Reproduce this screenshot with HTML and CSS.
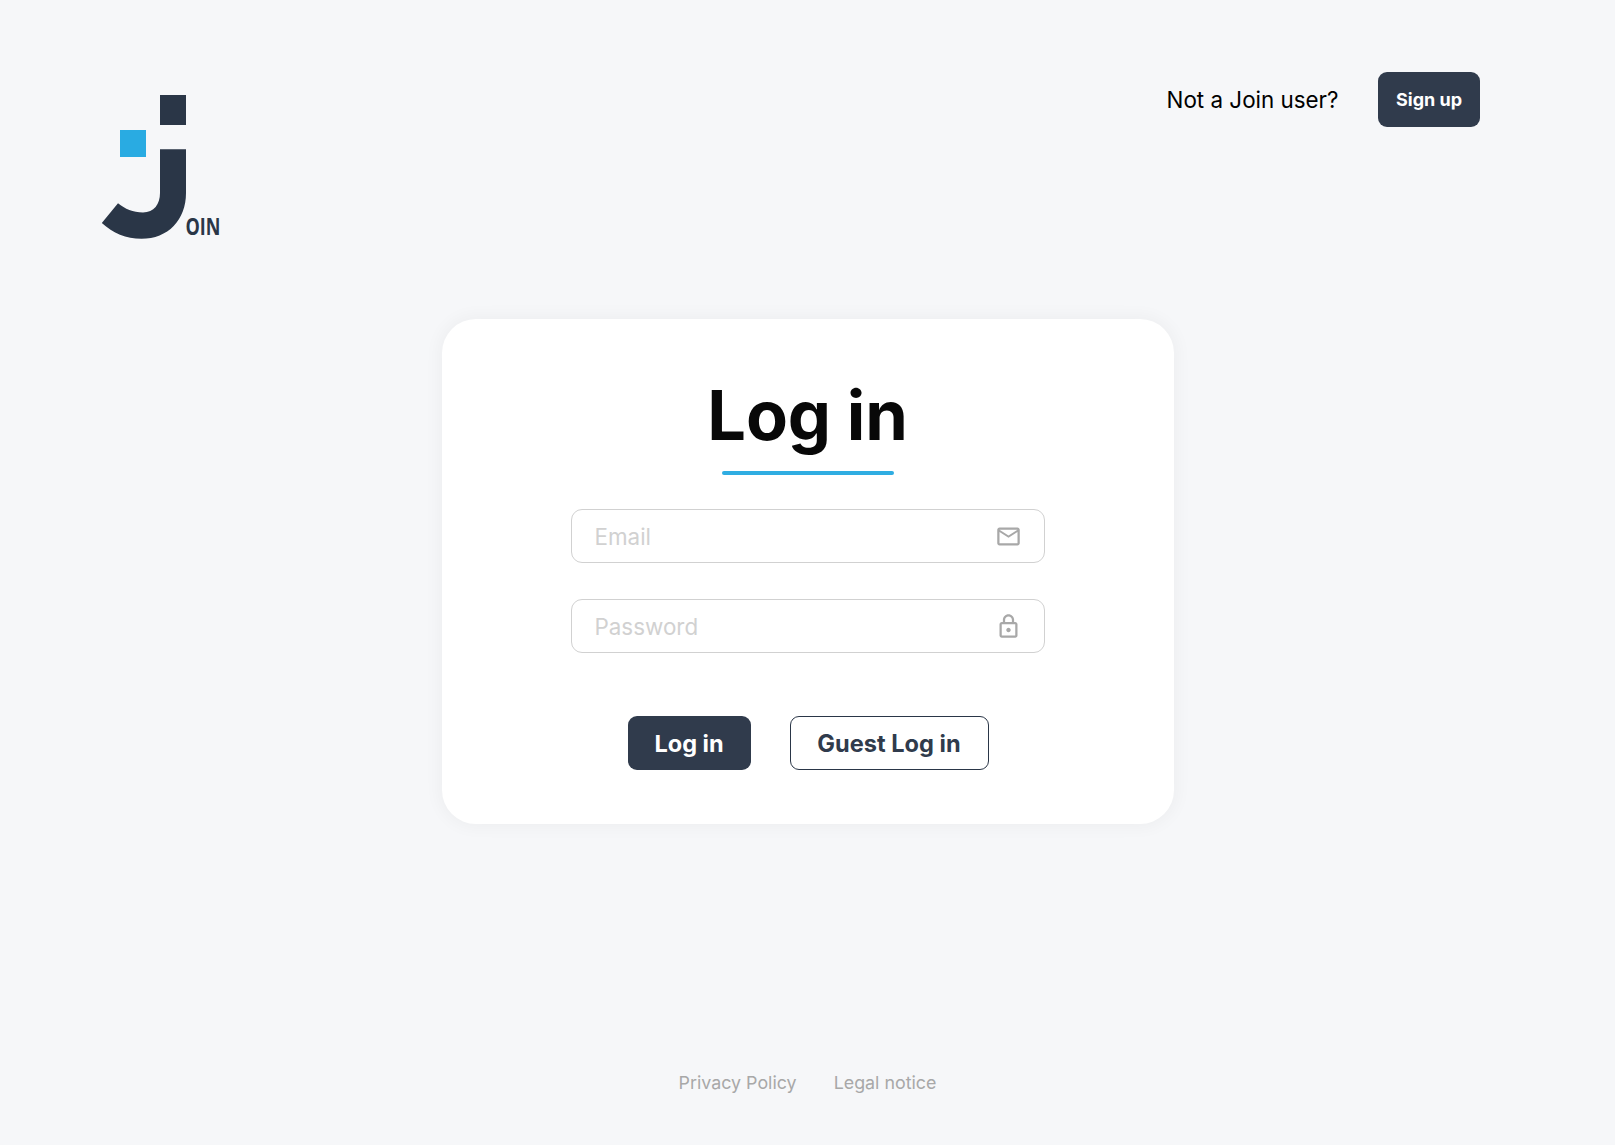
FILE: index.html
```html
<!DOCTYPE html>
<html lang="en">
<head>
<meta charset="utf-8">
<title>Join - Log in</title>
<link rel="stylesheet" href="styles.css">
</head>
<body>
<header class="header">
  <svg class="logo" width="130" height="150" viewBox="0 0 130 150" role="img" aria-label="Join">
    <path fill="#2a3647" d="M59 0h26v30H59zM59 54.200h26V98C85 125 67 143.800 40.500 143.800C25 143.800 12 138 .8 128L17 108.300C24 114 32 117.500 42 117.500C53 117.500 59 109 59 98z"/>
    <path fill="#29abe2" d="M19 35h26v27H19z"/>
    <text class="logo-text" x="84.500" y="139.700" textLength="35" lengthAdjust="spacingAndGlyphs">OIN</text>
  </svg>
  <div class="signup">
    <span class="signup-hint">Not a Join user?</span>
    <button class="btn btn-signup" type="button">Sign up</button>
  </div>
</header>
<main class="card">
  <h1 class="title">Log in</h1>
  <div class="underline"></div>
  <form class="form">
    <label class="field">
      <input class="input" type="email" placeholder="Email">
      <svg class="icon" width="27" height="27" viewBox="0 0 24 24"><path d="M22 6c0-1.100-.9-2-2-2H4c-1.100 0-2 .9-2 2v12c0 1.100.9 2 2 2h16c1.100 0 2-.9 2-2V6zm-2 0-8 5-8-5h16zm0 12H4V8l8 5 8-5v10z"/></svg>
    </label>
    <label class="field">
      <input class="input" type="password" placeholder="Password">
      <svg class="icon" width="27" height="27" viewBox="0 0 24 24"><path d="M18 8h-1V6c0-2.760-2.240-5-5-5S7 3.240 7 6v2H6c-1.100 0-2 .9-2 2v10c0 1.100.9 2 2 2h12c1.100 0 2-.9 2-2V10c0-1.100-.9-2-2-2zM9 6c0-1.660 1.340-3 3-3s3 1.340 3 3v2H9V6zm9 14H6V10h12v10zm-6-3c1.100 0 2-.9 2-2s-.9-2-2-2-2 .9-2 2 .9 2 2 2z"/></svg>
    </label>
    <div class="actions">
      <button class="btn btn-login" type="button">Log in</button>
      <button class="btn btn-guest" type="button">Guest Log in</button>
    </div>
  </form>
</main>
<footer class="footer">
  <a class="footer-link">Privacy Policy</a>
  <a class="footer-link">Legal notice</a>
</footer>
</body>
</html>
```
FILE: styles.css
```css
* { box-sizing: border-box; }
body {
  margin: 0;
  height: 1145px;
  overflow: hidden;
  display: flex;
  flex-direction: column;
  align-items: center;
  background: #f6f7f9;
  font-family: Inter, "Liberation Sans", sans-serif;
}
.header {
  width: 100%;
  height: 319px;
  padding: 72px 135px 0 101px;
  display: flex;
  justify-content: space-between;
  align-items: flex-start;
}
.logo { margin-top: 23px; }
.logo-text {
  font-family: "Open Sans", sans-serif;
  font-weight: 700;
  font-size: 22.500px;
  fill: #2a3647;
}
.signup { display: flex; align-items: center; gap: 39.500px; }
.signup-hint { font-size: 22.400px; font-weight: 400; color: #000; }
.btn {
  height: 54px;
  padding: 0;
  border: 0;
  border-radius: 9px;
  font-family: inherit;
  font-weight: 700;
  color: #fff;
  background: #303b4c;
}
.btn-signup { width: 102px; height: 55px; font-size: 18px; }
.card {
  width: 732px;
  height: 505px;
  border-radius: 34px;
  background: #fff;
  box-shadow: 0 0 16px 4px rgba(0, 0, 0, .035);
  display: flex;
  flex-direction: column;
  align-items: center;
  padding-top: 55px;
}
.title {
  margin: 0;
  font-size: 68.500px;
  line-height: 83px;
  font-weight: 700;
  letter-spacing: -.2px;
  color: #080808;
}
.underline {
  width: 172px;
  height: 4px;
  margin-top: 14px;
  border-radius: 2px;
  background: #2fade2;
}
.form { width: 474px; margin-top: 34px; }
.field {
  height: 54px;
  margin-bottom: 36px;
  padding: 0 22px;
  display: flex;
  align-items: center;
  border: 1px solid #d1d1d1;
  border-radius: 11px;
}
.input {
  flex: 1;
  min-width: 0;
  padding: 0 0 0 1px;
  border: 0;
  outline: 0;
  background: none;
  font-family: inherit;
  font-size: 22.400px;
}
.input::placeholder { color: #d1d1d1; opacity: 1; }
.icon { fill: #a8a8a8; margin-top: 1px; }
.actions {
  display: flex;
  justify-content: center;
  gap: 39px;
  padding: 27px 0 0 1px;
}
.btn-login { width: 123px; font-size: 23.500px; }
.btn-guest {
  width: 199px;
  font-size: 23.600px;
  border: 1px solid #2a3647;
  background: #fff;
  color: #303b4c;
}
.footer { display: flex; gap: 37px; margin-top: 248px; }
.footer-link { font-size: 17.850px; line-height: 22px; color: #a8a8a8; }
```
